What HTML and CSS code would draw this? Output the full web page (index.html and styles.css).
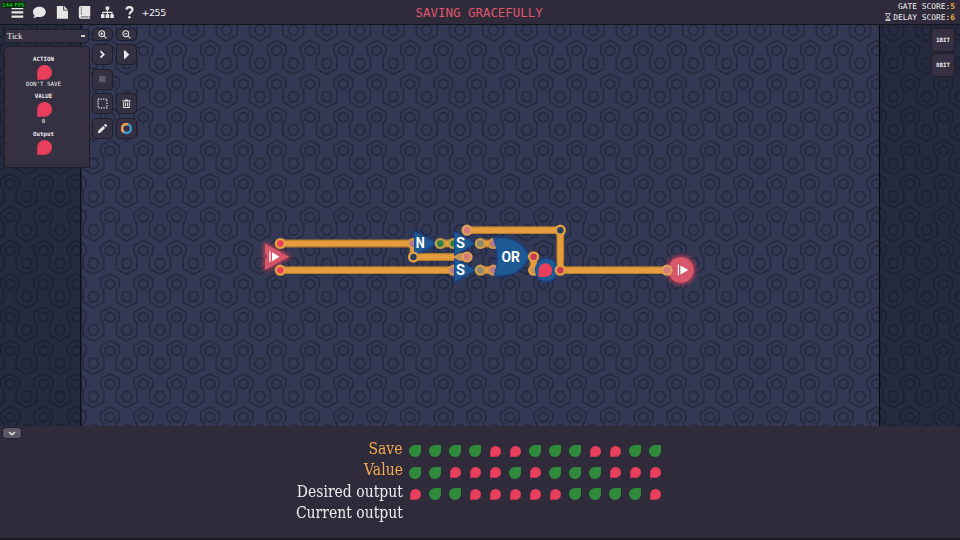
FILE: index.html
```html
<!DOCTYPE html>
<html lang="en">
<head>
    <meta charset="UTF-8">
    <title>Saving Gracefully</title>
    <link rel="stylesheet" href="styles.css">
</head>
<body>
    <header class="topbar">
        <nav class="menu">
            <svg class="icon" viewBox="0 0 12 12"><path d="M0.5 1h11v2h-11zM0.5 5h11v2h-11zM0.5 9h11v2h-11z"/></svg>
            <svg class="icon" viewBox="0 0 12 12"><path d="M6 .8c3.4 0 6 2.1 6 4.8s-2.6 4.8-6 4.8c-.8 0-1.600-.1-2.300-.3C2.600 10.900 1.300 11.400.2 11.400c.7-.8 1.100-1.600 1.200-2.500C.5 8 0 6.900 0 5.600 0 2.900 2.600.8 6 .8z"/></svg>
            <svg class="icon" viewBox="0 0 12 12"><path d="M.8 0h6v4.200h4.400V12H.8zM7.600 0l3.600 3.500H7.600z"/></svg>
            <svg class="icon" viewBox="0 0 12 12"><path d="M2.500 0h9v9.500h-.8v1.500h.8v1h-9A1.700 1.700 0 0 1 .8 10.300V1.700A1.700 1.700 0 0 1 2.500 0z"/><path class="cut" d="M2.600 9.600h7.300v1.300H2.600zM2.700 1h.8v7.500h-.8z"/></svg>
            <svg class="icon" viewBox="0 0 12 12"><path d="M4.300.5h3.400v3H6.500v2h4.300v2.300H12v3.400H8.700V7.800h1.100V6.500H6.500v1.300h1.200v3.400H4.300V7.800h1.200V6.500H2.200v1.300h1.100v3.400H0V7.800h1.200V5.500h4.300v-2H4.300z"/></svg>
            <svg class="icon" viewBox="0 0 12 12"><path class="line" d="M3.200 3.300C3.400 1.700 4.500 1 6 1c1.700 0 2.900.9 2.900 2.500C8.900 5.500 6 5.600 6 8"/><circle cx="6" cy="10.600" r="1.200"/></svg>
            <span class="plus">+255</span>
        </nav>
        <span class="fps">144 FPS</span>
        <h1 class="title">SAVING GRACEFULLY</h1>
        <div class="scores">
            <div>GATE SCORE:<b>5</b></div>
            <div><svg class="glass" viewBox="0 0 6 8"><path d="M.5.500h5M.5 7.500h5M1 .5c0 2 1.500 2.500 1.500 3.500S1 5.500 1 7.500M5 .5C5 2.500 3.500 3 3.500 4S5 5.500 5 7.500M2 6.500h2"/></svg>DELAY SCORE:<b>6</b></div>
        </div>
    </header>

    <main class="board">
        <svg class="canvas" viewBox="0 25 960 401" width="960" height="401">
            <defs>
                <filter id="glow" x="-60%" y="-60%" width="220%" height="220%"><feGaussianBlur stdDeviation="2.500"/></filter>
            </defs>
            <rect class="field" y="25" width="960" height="401"/>
            <path class="hex" id="hexes"/>
            <rect class="side" y="25" width="81" height="401"/>
            <rect class="side" x="880" y="25" width="80" height="401"/>
            <path class="limit" d="M80.800 25V426M879.500 25V426"/>

            <!-- input pin -->
            <path class="redglow" filter="url(#glow)" d="M264 242L291 256.800L264 271.500Z"/>
            <path class="pin" d="M265 243.500L289 256.800L265 270V260L268 256.800L265 253.500Z"/>
            <path class="play" d="M269.300 251.500h1.300v10.500h-1.300zM272 252.300L279.500 256.800L272 261.200Z"/>
            <!-- output pin -->
            <circle class="redglow" filter="url(#glow)" cx="681" cy="270" r="14"/>
            <circle class="pin" cx="681" cy="270" r="12.700"/>
            <path class="play" d="M677.800 264.500h1.200v10.800h-1.200zM680.400 265.500L688.300 270L680.400 274.600Z"/>

            <g class="gateglow" filter="url(#glow)">
                <path d="M414 231.500L438 243.600L414 256Z"/>
                <path d="M454.500 231.500L475.500 243.600L454.500 255.500Z"/>
                <path d="M454.500 258.500L475.500 270L454.500 281.500Z"/>
                <path d="M493.300 238.300C510 236 522 242 529.500 256.600C522 271 510 277.500 493.300 275Q502 256.600 493.300 238.300Z"/>
                <circle cx="546.500" cy="270" r="11.500"/>
            </g>

            <path class="wire-edge" d="M280.300 243.500H412M280.300 270.200H453M413.500 243.500V257H467M440 243.500H454M467 230.200H560.300V270.200H667M480.300 243.500H493.300M480.300 270.200H493.300M533.600 256.800V270.200"/>
            <path class="wire" d="M280.300 243.500H412M280.300 270.200H453M413.500 243.500V257H467M440 243.500H454M467 230.200H560.300V270.200H667M480.300 243.500H493.300M480.300 270.200H493.300M533.600 256.800V270.200"/>

            <g class="node">
                <circle class="muted" cx="413" cy="243.500" r="4.400"/>
                <circle class="green" cx="453.500" cy="243.500" r="4.400"/>
                <circle class="muted" cx="453.500" cy="270.200" r="4.400"/>
                <circle class="muted" cx="493.300" cy="243.500" r="4.400"/>
                <circle class="muted" cx="493.300" cy="270.200" r="4.400"/>
                <circle class="tan" cx="533.600" cy="270.200" r="4.400"/>
            </g>

            <g class="gate">
                <path d="M414.500 231.500L437 243.600L414.500 255.500Z"/>
                <circle cx="434.500" cy="243.600" r="2"/>
                <path d="M454.500 231.500L475 243.600L454.500 255.500Z"/>
                <path d="M454.500 258.500L475 270L454.500 281.500Z"/>
                <path d="M493.500 238.500C510 236 522 242 529.500 256.600C522 271 510 277.300 494.300 275.300Q501 256.600 493.500 238.500Z"/>
                <circle cx="546.500" cy="270" r="11.200"/>
            </g>
            <path class="flag" d="M538.500 277V270A6.900 6.900 0 1 1 545.500 277Z"/>
            <path class="tail" d="M454 257L460 254.300H464V259.800H460Z"/>

            <g class="node">
                <circle class="red" cx="280.300" cy="243.500" r="4.400"/>
                <circle class="red" cx="280.300" cy="270.200" r="4.400"/>
                <circle class="hollow" cx="413.500" cy="257" r="4.400"/>
                <circle class="green" cx="440.300" cy="243.500" r="4.400"/>
                <circle class="pink" cx="467" cy="230.200" r="4.400"/>
                <circle class="pink" cx="467" cy="257" r="4.400"/>
                <circle class="grey" cx="480.300" cy="243.500" r="4.400"/>
                <circle class="grey" cx="480.300" cy="270.200" r="4.400"/>
                <circle class="crimson" cx="533.600" cy="256.800" r="4.400"/>
                <circle class="hollow" cx="560.300" cy="230.200" r="4.400"/>
                <circle class="crimson" cx="560.300" cy="270.200" r="4.400"/>
                <circle class="pink" cx="667" cy="270.200" r="4.400"/>
            </g>
            <g class="gate-name">
                <text x="420.200" y="248.200" textLength="9" lengthAdjust="spacingAndGlyphs">N</text>
                <text x="460.500" y="248.200" textLength="9" lengthAdjust="spacingAndGlyphs">S</text>
                <text x="460.500" y="275" textLength="9" lengthAdjust="spacingAndGlyphs">S</text>
                <text x="510.700" y="261.500" textLength="18.500" lengthAdjust="spacingAndGlyphs">OR</text>
            </g>
        </svg>

        <aside class="tick">
            <div class="tick-head"><span>Tick</span><i></i></div>
            <div class="tick-body">
                <div class="signal"><b>ACTION</b><i class="drop big"></i><span>DON'T SAVE</span></div>
                <div class="signal"><b>VALUE</b><i class="drop big"></i><span>0</span></div>
                <div class="signal"><b>Output</b><i class="drop big"></i></div>
            </div>
        </aside>

        <div class="tools">
            <button class="tool"><svg viewBox="0 0 12 12"><circle class="line thin" cx="5.200" cy="5.200" r="3.200"/><path class="line thin" d="M7.600 7.600L10.300 10.300M3.600 5.200h3.200M5.200 3.600v3.200"/></svg></button>
            <button class="tool"><svg viewBox="0 0 12 12"><circle class="line thin" cx="5.200" cy="5.200" r="3.200"/><path class="line thin" d="M7.600 7.600L10.300 10.300M3.600 5.200h3.200"/></svg></button>
            <button class="tool"><svg viewBox="0 0 12 12"><path class="line" d="M3.800 2.300L7.300 5.900L3.800 9.500"/></svg></button>
            <button class="tool"><svg viewBox="0 0 12 12"><path d="M3.200 1.500h1.300L9 6L4.500 10.500H3.200z"/></svg></button>
            <button class="tool"><svg viewBox="0 0 12 12"><path class="off" d="M2.300 2h7v7h-7z"/></svg></button>
            <span></span>
            <button class="tool"><svg viewBox="0 0 12 12"><path class="line dashed" d="M1.200 1.200h9.600v9.600h-9.600z"/></svg></button>
            <button class="tool"><svg viewBox="0 0 12 12"><path d="M4.500 1.500h3v.9h2.800v1.300H1.700V2.400h2.800z"/><path class="line thin" d="M2.900 4.300v6h6.200v-6M5 5v4M7 5v4"/></svg></button>
            <button class="tool"><svg viewBox="0 0 12 12"><path d="M.8 11.200L1.500 8.300L6.700 3.200L8.900 5.400L3.700 10.500ZM7.400 2.500L8.600 1.300Q9.300.8 9.900 1.300L10.800 2.200Q11.300 2.900 10.800 3.500L9.600 4.700Z"/></svg></button>
            <button class="tool"><svg viewBox="0 0 12 12"><circle class="ring-blue" cx="6" cy="6" r="4.800"/><path class="ring-gold" d="M3.200 9.900A4.800 4.800 0 0 1 7.500 1.400"/></svg></button>
        </div>

        <div class="bits">
            <button>1BIT</button>
            <button>8BIT</button>
        </div>
    </main>

    <footer class="results">
        <button class="fold"><svg viewBox="0 0 8 5"><path class="line" d="M1 1L4 3.800L7 1"/></svg></button>
        <div class="table">
            <div class="row" data-bits="1111001110011"><span class="label gold">Save</span></div>
            <div class="row" data-bits="1100010111000"><span class="label gold">Value</span></div>
            <div class="row" data-bits="0110000011110"><span class="label">Desired output</span></div>
            <div class="row" data-bits=""><span class="label">Current output</span></div>
        </div>
    </footer>

    <script>
        // board background: wavy hexagon outlines with a small hexagon in each bulge
        const cell = 100 / 3;
        let d = '';

        function trace(x, y, points, close) {
            d += 'M' + points.map(function(p) {
                return (x + p[0] / 3).toFixed(2) + ' ' + (y + p[1] / 3).toFixed(2);
            }).join('L') + (close ? 'Z' : '');
        }

        const wave = [[0, -31], [28, -15], [28, 8], [19, 18], [19, 54], [50, 71], [81, 54], [81, 18], [72, 8], [72, -15], [100, -31]];
        const upper = [[-14, -7], [0, -15], [14, -7], [14, 7], [0, 15], [-14, 7]];
        const lower = [[42, 23], [58, 23], [66, 38], [58, 53], [42, 53], [34, 38]];

        for (let y = 17.33; y < 460; y += cell) {
            for (let x = -23.33; x < 980; x += cell) {
                trace(x, y, wave, false);
                trace(x, y, upper, true);
                trace(x, y, lower, true);
            }
        }
        document.getElementById('hexes').setAttribute('d', d);

        document.querySelectorAll('.row').forEach(function(row) {
            for (const bit of row.dataset.bits) {
                const drop = document.createElement('i');
                drop.className = bit === '1' ? 'drop on' : 'drop';
                row.appendChild(drop);
            }
        });
    </script>
</body>
</html>
```
FILE: styles.css
```css
* {
    box-sizing: border-box;
}
body {
    margin: 0;
    width: 960px;
    height: 540px;
    overflow: hidden;
    display: flex;
    flex-direction: column;
    background: #2f2b3b;
    color: #eee;
    font-family: "DejaVu Sans Mono", monospace;
}
svg {
    display: block;
    fill: #e6e6e6;
}
button {
    padding: 0;
    border: 1px solid #211f2c;
    border-radius: 4px;
    background: #353143;
    color: #eee;
    font-family: inherit;
}
.line {
    fill: none;
    stroke: #e6e6e6;
    stroke-width: 2;
}
.thin {
    stroke-width: 1.1;
}
.dashed {
    stroke-width: 1.4;
    stroke-dasharray: 1.4 1.3;
}
.off {
    fill: #5c5969;
}

/* top bar */
.topbar {
    position: relative;
    flex: none;
    display: flex;
    justify-content: space-between;
    height: 25px;
    border-bottom: 1px solid #15141c;
}
.menu {
    display: flex;
    align-items: center;
    gap: 9.7px;
    padding-left: 11px;
    height: 25px;
}
.icon {
    width: 12.8px;
    height: 12.8px;
}
.cut {
    fill: #77747f;
}
.plus {
    margin-left: -4.5px;
    font: 9.5px "DejaVu Sans", sans-serif;
    letter-spacing: -0.4px;
}
.fps {
    position: absolute;
    left: 2px;
    top: 2px;
    background: #0a2b12;
    color: #12e012;
    font: 5.6px/6px "DejaVu Sans", sans-serif;
}
.title {
    position: absolute;
    left: 415.5px;
    top: 5px;
    margin: 0;
    color: #e0566c;
    font-size: 12.45px;
    font-weight: normal;
    line-height: 15px;
}
.scores {
    padding: 2px 5px 0 0;
    text-align: right;
    font-size: 7.9px;
    line-height: 10.7px;
}
.scores b {
    color: #f0a83c;
}
.glass {
    display: inline-block;
    width: 6px;
    height: 8px;
    margin-right: 2px;
    vertical-align: -1px;
    fill: none;
    stroke: #eee;
    stroke-width: .8;
}

/* circuit board */
.board {
    position: relative;
    flex: none;
    height: 401px;
    border-bottom: 1px solid #15151f;
}
.field {
    fill: #333954;
}
.hex {
    fill: none;
    stroke: #262b40;
    stroke-width: 1.7;
}
.side {
    fill: #15151f;
    opacity: .4;
}
.limit {
    stroke: #090a10;
    stroke-width: 1.2;
}
.wire-edge {
    fill: none;
    stroke: #b47a2e;
    stroke-width: 7.8;
}
.wire {
    fill: none;
    stroke: #e59d3d;
    stroke-width: 5.4;
}
.node circle {
    stroke: #e3a042;
    stroke-width: 2.4;
}
.node .red {
    fill: #e93d5b;
}
.node .crimson {
    fill: #c9375a;
}
.node .pink {
    fill: #d9797a;
    stroke: #dca05c;
}
.node .muted {
    fill: #b5788a;
    stroke: #d3954c;
}
.node .tan {
    fill: #c99550;
}
.node .grey {
    fill: #8a8870;
    stroke: #cf9a4a;
}
.node .green {
    fill: #238149;
    stroke: #c89a46;
}
.node .hollow {
    fill: #28405f;
}
.gate > * {
    fill: #1d5a94;
    stroke: #16468b;
    stroke-width: .9;
}
.gateglow {
    fill: #143f98;
    opacity: .75;
}
.redglow {
    fill: #e8405c;
    opacity: .85;
}
.pin {
    fill: #d6566a;
}
.play {
    fill: #fff;
}
.flag {
    fill: #ea3f5c;
}
.tail {
    fill: #c69160;
}
.gate-name text {
    fill: #fff;
    font: bold 14.5px Roboto, sans-serif;
    text-anchor: middle;
}

/* red drop is 0, green drop is 1 */
.drop {
    width: 11px;
    height: 11px;
    border-radius: 50% 50% 50% 0;
    background: #ea3f5c;
    border: solid #b93650;
    border-width: 0 0 1px 1px;
}
.drop.on {
    width: 12px;
    height: 12px;
    border: none;
    border-radius: 50% 0 50% 50%;
    background: #2f8b3b;
}
.drop.big {
    width: 15px;
    height: 15px;
}

/* tick panel */
.tick {
    position: absolute;
    left: 4px;
    top: 4px;
    width: 86px;
}
.tick-head {
    display: flex;
    justify-content: space-between;
    align-items: center;
    width: 85px;
    height: 14px;
    padding: 0 3px 0 2px;
    border: 1px solid #211f2c;
    border-radius: 3px;
    background: #353143;
    font: 8.5px "Liberation Serif", serif;
}
.tick-head i {
    width: 4px;
    height: 1.5px;
    background: #ccc;
}
.tick-body {
    height: 122px;
    margin-top: 3px;
    padding: 9px 7px 0 0;
    border: 1px solid #211f2c;
    border-radius: 4px;
    background: #353143;
    font-size: 5.8px;
    line-height: 7px;
}
.signal {
    display: flex;
    flex-direction: column;
    align-items: center;
    height: 37.4px;
}
.signal .drop {
    flex: none;
    margin: 2px 0 1px 1px;
}

/* tool buttons */
.tools {
    position: absolute;
    left: 92px;
    top: 3px;
    display: grid;
    grid-template-columns: 21px 21px;
    grid-template-rows: 13px 21px 21px 21px 21px;
    gap: 3px;
    row-gap: 3.4px;
}
.tool {
    display: flex;
    align-items: center;
    justify-content: center;
}
.tool svg {
    width: 11px;
    height: 11px;
}
.ring-blue,
.ring-gold {
    fill: none;
    stroke: #3d9bd0;
    stroke-width: 2.6;
}
.ring-gold {
    stroke: #f0a04b;
}
.bits {
    position: absolute;
    right: 5px;
    top: 3px;
    display: grid;
    gap: 1px;
}
.bits button {
    width: 24px;
    height: 24px;
    font-size: 5.8px;
    font-weight: bold;
}

/* results */
.results {
    position: relative;
    flex: 1;
    border-bottom: 2px solid #1a1822;
}
.fold {
    position: absolute;
    left: 2px;
    top: 1px;
    display: flex;
    align-items: center;
    justify-content: center;
    width: 20px;
    height: 12px;
    background: #5a5666;
}
.fold svg {
    width: 8px;
}
.fold .line {
    stroke-width: 1.5;
}
.table {
    padding: 12.4px 0 0 283px;
}
.row {
    display: grid;
    grid-template-columns: 120px;
    grid-auto-flow: column;
    grid-auto-columns: 20px;
    align-items: center;
    justify-content: start;
    height: 21.4px;
}
.row .drop {
    margin: 4.4px 0 0 6.5px;
}
.row .drop.on {
    margin-left: 6px;
}
.label {
    font: 15.8px/20px "DejaVu Serif", serif;
    text-align: right;
    white-space: nowrap;
    transform: scaleX(.885);
    transform-origin: right;
    justify-self: end;
}
.gold {
    color: #f2aa50;
}
```
